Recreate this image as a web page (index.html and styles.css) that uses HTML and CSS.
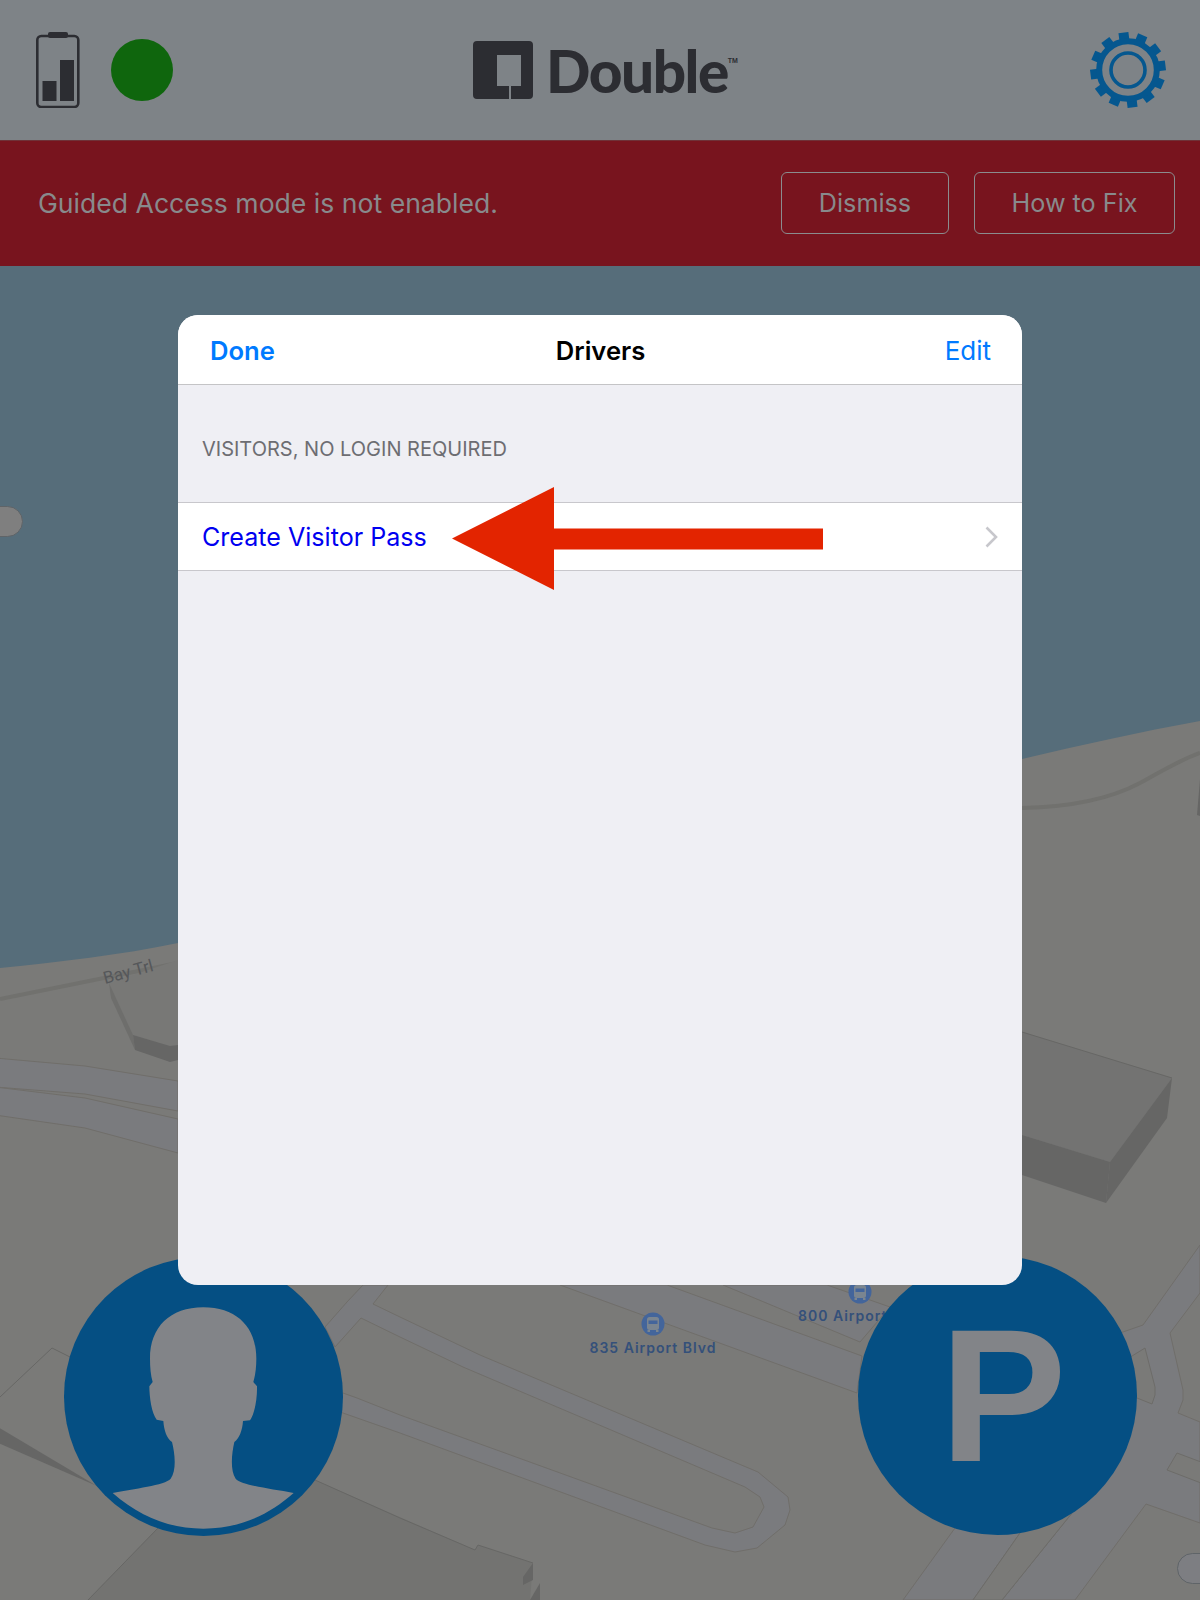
FILE: index.html
```html
<!DOCTYPE html>
<html lang="en">
<head>
<meta charset="utf-8">
<title>Double</title>
<link rel="stylesheet" href="styles.css">
</head>
<body>
<div class="page">
  <svg class="map" viewBox="0 0 1200 1600" width="1200" height="1600" aria-hidden="true">
    <rect class="water" x="0" y="0" width="1200" height="1100"/>
    <path class="land" d="M0 968 C60 962 120 955 178 943 L600 850 L1022 759 C1080 745 1140 732 1200 721 L1200 1600 L0 1600 Z"/>
    <!-- trails -->
    <path class="trail" d="M0 999 L178 963"/>
    <path class="trail" d="M1022 808 C1070 807 1110 799 1140 783 C1160 772 1180 760 1200 753"/>
    <polygon class="bside" points="1200,779 1197,815 1200,816"/>
    <!-- left building -->
    <polygon class="btop" points="109,983 178,960 178,1045 170,1046 133,1035"/>
    <polygon class="bside-light" points="109,983 133,1035 135,1050 111,998"/>
    <polygon class="bside" points="133,1035 170,1046 178,1045 178,1060 170,1062 135,1050"/>
    <!-- left roads -->
    <polygon class="road" points="-5,1058 85,1066 178,1081 178,1111 85,1094 -5,1087"/>
    <polygon class="road" points="-5,1087 85,1098 178,1119 178,1153 85,1128 -5,1115"/>
    <!-- right building -->
    <polygon class="btop2" points="1022,1032 1172,1078 1110,1162 1022,1135"/>
    <polyline class="edge" points="1022,1032 1172,1078"/>
    <polygon class="bside" points="1172,1078 1167,1118 1106,1203 1110,1162"/>
    <polygon class="bside" points="1022,1135 1110,1162 1106,1203 1022,1175"/>
    <!-- bottom left block -->
    <polyline class="edge" points="0,1397 52,1348 70,1357"/>
    <polygon class="btop3" points="158,1528 88,1600 530,1600 533,1563 478,1545 475,1550 315,1480 240,1450"/>
    <polygon class="bside" points="-2,1427 97,1486 -2,1443"/>
    <polygon class="bside" points="533,1563 523,1577 523,1585 533,1580"/>
    <polygon class="bside" points="540,1583 540,1600 530,1600"/>
    <polyline class="edge" points="315,1480 400,1518 475,1550 478,1545 533,1563"/>
    <polyline class="edge" points="158,1528 88,1600"/>
    <!-- hairpin road -->
    <polygon class="road" points="325,1327 347,1302 363,1285 388,1285 373,1304 400,1317 480,1355 758,1472 788,1497 790,1510 785,1525 757,1548 735,1552 705,1545 400,1433 343,1413 320,1405 320,1393 343,1393 357,1398 400,1415 712,1528 735,1533 753,1527 764,1507 760,1497 745,1487 463,1367 400,1337 361,1318 335,1347"/>
    <!-- airport blvd roads -->
    <polygon class="road" points="560,1285 667,1285 862,1356 857,1393"/>
    <polygon class="road" points="723,1285 827,1285 890,1307 860,1342"/>
    <!-- right junction -->
    <polygon class="road" points="1100,1340 1143,1325 1200,1245 1200,1293 1170,1333 1183,1390 1183,1400 1178,1413 1200,1422 1200,1523 1146,1504 1075,1600 1002,1600 1072,1513 1045,1500 1020,1533 973,1600 903,1600 955,1528 1000,1400"/>
    <polygon class="land island" points="1132,1356 1145,1348 1155,1387 1155,1395 1152,1404 1137,1398 1100,1380"/>
    <polygon class="land island" points="1177,1453 1201,1462 1201,1483 1167,1470"/>
    <polygon class="land island" points="1020,1533 1045,1500 1072,1513 1002,1600 973,1600"/>
    <!-- labels -->
    <text class="trail-label" transform="translate(105 984) rotate(-15)">Bay Trl</text>
    <g class="bus" transform="translate(653 1324)">
      <circle class="bus-disc" r="11.5"/>
      <rect class="bus-body" x="-6" y="-7" width="12" height="13" rx="2.5"/>
      <rect class="bus-glass" x="-4.5" y="-3.5" width="9" height="3.5"/>
      <rect class="bus-body" x="-5.5" y="6" width="2.5" height="2"/>
      <rect class="bus-body" x="3" y="6" width="2.5" height="2"/>
    </g>
    <text class="poi" x="653" y="1353" text-anchor="middle">835 Airport Blvd</text>
    <g class="bus" transform="translate(860 1292)">
      <circle class="bus-disc" r="11.5"/>
      <rect class="bus-body" x="-6" y="-7" width="12" height="13" rx="2.5"/>
      <rect class="bus-glass" x="-4.5" y="-3.5" width="9" height="3.5"/>
      <rect class="bus-body" x="-5.5" y="6" width="2.5" height="2"/>
      <rect class="bus-body" x="3" y="6" width="2.5" height="2"/>
    </g>
    <text class="poi" x="798" y="1321">800 Airport</text>
  </svg>

  <span class="pill pill-left"></span>
  <span class="pill pill-right"></span>

  <header class="topbar">
    <div class="status">
      <svg class="battery" width="44" height="76" viewBox="0 0 44 76" aria-hidden="true">
        <rect class="batt-cap" x="12" y="0" width="20" height="6" rx="2"/>
        <rect class="batt-case" x="1.3" y="4" width="41" height="71" rx="4"/>
        <rect class="batt-bar" x="6.5" y="49" width="14" height="20"/>
        <rect class="batt-bar" x="24" y="28" width="14" height="41"/>
      </svg>
      <span class="dot"></span>
    </div>
    <div class="logo">
      <svg class="logo-mark" width="60" height="58" viewBox="0 0 60 58" aria-hidden="true">
        <path class="logo-fill" fill-rule="evenodd" d="M4 0H56A4 4 0 0 1 60 4V54A4 4 0 0 1 56 58H38V45H48V14H24V45H36V58H4A4 4 0 0 1 0 54V4A4 4 0 0 1 4 0Z"/>
      </svg>
      <span class="logo-word">Double</span><span class="logo-tm">TM</span>
    </div>
    <div class="settings">
      <svg class="gear" width="80" height="80" viewBox="-40 -40 80 80" aria-hidden="true">
        <g class="gear-teeth">
          <rect x="-5" y="-37.7" width="10" height="10" transform="rotate(-7)"/>
          <rect x="-5" y="-37.7" width="10" height="10" transform="rotate(23)"/>
          <rect x="-5" y="-37.7" width="10" height="10" transform="rotate(53)"/>
          <rect x="-5" y="-37.7" width="10" height="10" transform="rotate(83)"/>
          <rect x="-5" y="-37.7" width="10" height="10" transform="rotate(113)"/>
          <rect x="-5" y="-37.7" width="10" height="10" transform="rotate(143)"/>
          <rect x="-5" y="-37.7" width="10" height="10" transform="rotate(173)"/>
          <rect x="-5" y="-37.7" width="10" height="10" transform="rotate(203)"/>
          <rect x="-5" y="-37.7" width="10" height="10" transform="rotate(233)"/>
          <rect x="-5" y="-37.7" width="10" height="10" transform="rotate(263)"/>
          <rect x="-5" y="-37.7" width="10" height="10" transform="rotate(293)"/>
          <rect x="-5" y="-37.7" width="10" height="10" transform="rotate(323)"/>
        </g>
        <circle class="gear-band" r="28.8"/>
        <circle class="gear-ring" r="17"/>
      </svg>
    </div>
  </header>

  <div class="banner">
    <p class="banner-text">Guided Access mode is not enabled.</p>
    <div class="banner-actions">
      <button class="banner-btn btn-dismiss">Dismiss</button>
      <button class="banner-btn btn-fix">How to Fix</button>
    </div>
  </div>

  <main class="stage">
    <section class="modal">
      <div class="nav">
        <span class="nav-done">Done</span>
        <span class="nav-title">Drivers</span>
        <span class="nav-edit">Edit</span>
      </div>
      <div class="section-head">VISITORS, NO LOGIN REQUIRED</div>
      <div class="row">
        <span class="row-label">Create Visitor Pass</span>
        <svg class="chevron" width="13" height="22" viewBox="0 0 13 22" aria-hidden="true">
          <path d="M1.5 1.5L11 11L1.5 20.5"/>
        </svg>
      </div>
      <svg class="arrow" width="372" height="104" viewBox="0 0 372 104" aria-hidden="true">
        <polygon points="0,51.5 102,0 102,41.5 371,41.5 371,62.5 102,62.5 102,103"/>
      </svg>
    </section>
  </main>

  <div class="fab fab-person">
    <svg class="silhouette" width="279" height="279" viewBox="192 80 837 837" aria-hidden="true">
      <path d="M610 231C510 231 450 290 450 385C450 410 452 435 458 455L448 468C448 500 455 550 470 568L490 572C492 600 500 625 516 635C525 670 530 720 512 745C495 765 400 775 338 788C420 860 510 895 610 895C710 895 800 860 881 788C810 775 725 765 707 745C690 720 695 670 703 635C718 625 727 600 729 572L750 570C765 550 772 500 771 468L760 455C766 435 769 410 769 385C769 290 710 231 610 231Z"/>
    </svg>
  </div>
  <div class="fab fab-parking"><span class="fab-letter">P</span></div>
</div>
</body>
</html>
```
FILE: styles.css
```css
* { box-sizing: border-box; }
html, body { margin: 0; padding: 0; }
body { font-family: Inter, "Noto Sans", "Liberation Sans", sans-serif; background: #566d7a; }

.page {
  position: relative;
  width: 1200px;
  height: 1600px;
  overflow: hidden;
  display: flex;
  flex-direction: column;
}

/* map canvas */
.map { position: absolute; left: 0; top: 0; display: block; }
.water { fill: #566d7a; }
.land { fill: #7a7a78; }
.island { stroke: #6d6c69; stroke-width: 1; }
.road { fill: #7a7b7e; stroke: #706e6a; stroke-width: 1; }
.trail { fill: none; stroke: #71716e; stroke-width: 4; }
.edge { fill: none; stroke: #676765; stroke-width: 1; }
.btop { fill: #787876; }
.btop2 { fill: #737372; }
.btop3 { fill: #737371; }
.bside { fill: #666665; }
.bside-light { fill: #6e6e6c; }
.trail-label { font-family: Roboto, "Liberation Sans", sans-serif; font-size: 17px; fill: #55575a; }
.poi { font-family: Inter, "Liberation Sans", sans-serif; font-size: 14px; font-weight: 600; letter-spacing: 1px; fill: #34507a; }
.bus-disc { fill: #43659b; }
.bus-body { fill: #7a8590; }
.bus-glass { fill: #43659b; }

.pill { position: absolute; display: block; border: 1px solid #5f6468; }
.pill-left { left: -20px; top: 506px; width: 43px; height: 31px; border-radius: 16px; background: #7f7f7f; }
.pill-right { left: 1177px; top: 1553px; width: 60px; height: 31px; border-radius: 16px; background: #7d7e82; }

/* top bar */
.topbar {
  position: relative;
  flex: none;
  height: 140px;
  background: #7e8387;
  display: grid;
  grid-template-columns: 1fr auto 1fr;
  align-items: center;
}
.status { display: flex; align-items: center; gap: 31px; padding-left: 36px; }
.battery { display: block; }
.batt-cap { fill: #2c2d32; }
.batt-case { fill: none; stroke: #2c2d32; stroke-width: 2.6; }
.batt-bar { fill: #2c2d32; }
.dot { width: 62px; height: 62px; border-radius: 50%; background: #0f660d; }

.logo { display: flex; align-items: center; margin-left: 11px; position: relative; }
.logo-mark { display: block; margin-right: 13px; }
.logo-fill { fill: #2c2d32; }
.logo-word {
  font-family: Lato, sans-serif;
  font-weight: 900;
  font-size: 58.5px;
  line-height: 60px;
  letter-spacing: -1.5px;
  color: #2c2d32;
}
.logo-tm {
  font-family: "Liberation Sans", sans-serif;
  font-size: 7px;
  font-weight: 700;
  line-height: 8px;
  color: #2c2d32;
  align-self: flex-start;
  margin-top: 17px;
}
.settings { display: flex; justify-content: flex-end; padding-right: 32px; }
.gear { display: block; }
.gear-teeth { fill: #05578f; }
.gear-band { fill: none; stroke: #05578f; stroke-width: 6; }
.gear-ring { fill: none; stroke: #05578f; stroke-width: 3.6; }

/* banner */
.banner {
  position: relative;
  flex: none;
  height: 126px;
  background: #78141e;
  border-top: 1px solid #6f3238;
  display: flex;
  align-items: center;
  justify-content: space-between;
  padding: 0 25px 2px 38px;
}
.banner-text { margin: 0; font-size: 26.6px; color: #888a8c; }
.banner-actions { display: flex; gap: 25px; }
.banner-btn {
  height: 62px;
  border: 1.5px solid #8b8c8e;
  border-radius: 6px;
  background: transparent;
  color: #888a8c;
  font-family: inherit;
  font-size: 25.2px;
  padding: 0;
}
.btn-dismiss { width: 168px; }
.btn-fix { width: 201px; }

/* modal */
.stage { position: relative; z-index: 2; flex: 1; display: flex; justify-content: center; padding-top: 49px; }
.modal {
  position: relative;
  width: 844px;
  height: 970px;
  border-radius: 20px;
  background: #efeff4;
  overflow: hidden;
}
.nav {
  height: 70px;
  padding: 1px 31px 0 32px;
  background: #fff;
  border-bottom: 1px solid #c4c4c6;
  display: grid;
  grid-template-columns: 1fr auto 1fr;
  align-items: center;
  font-size: 25.6px;
}
.nav-done { color: #007aff; font-weight: 600; }
.nav-title { color: #000; font-weight: 600; }
.nav-edit { color: #007aff; text-align: right; font-size: 26px; }
.section-head {
  height: 117px;
  padding: 11px 24px 0;
  display: flex;
  align-items: center;
  font-size: 20px;
  color: #6d6d72;
}
.row {
  height: 69px;
  padding: 0 24px;
  background: #fff;
  border-top: 1px solid #c8c7cc;
  border-bottom: 1px solid #c8c7cc;
  display: flex;
  align-items: center;
  justify-content: space-between;
}
.row-label { font-size: 25.1px; color: #0000f0; }
.chevron { display: block; }
.chevron path { fill: none; stroke: #c7c7cc; stroke-width: 2.6; }
.arrow { position: absolute; left: 274px; top: 172px; display: block; }
.arrow polygon { fill: #e32400; }

/* round buttons */
.fab {
  position: absolute;
  width: 279px;
  height: 279px;
  border-radius: 50%;
  background: #054f83;
  display: flex;
  align-items: center;
  justify-content: center;
}
.fab-person { left: 64px; top: 1257px; }
.fab-parking { left: 857.5px; top: 1255.5px; }
.silhouette { display: block; }
.silhouette path { fill: #828488; }
.fab-letter {
  font-family: "Liberation Sans", sans-serif;
  font-size: 190px;
  font-weight: 700;
  line-height: 1;
  color: #828488;
  margin: -1px 0 0 12px;
}
```
